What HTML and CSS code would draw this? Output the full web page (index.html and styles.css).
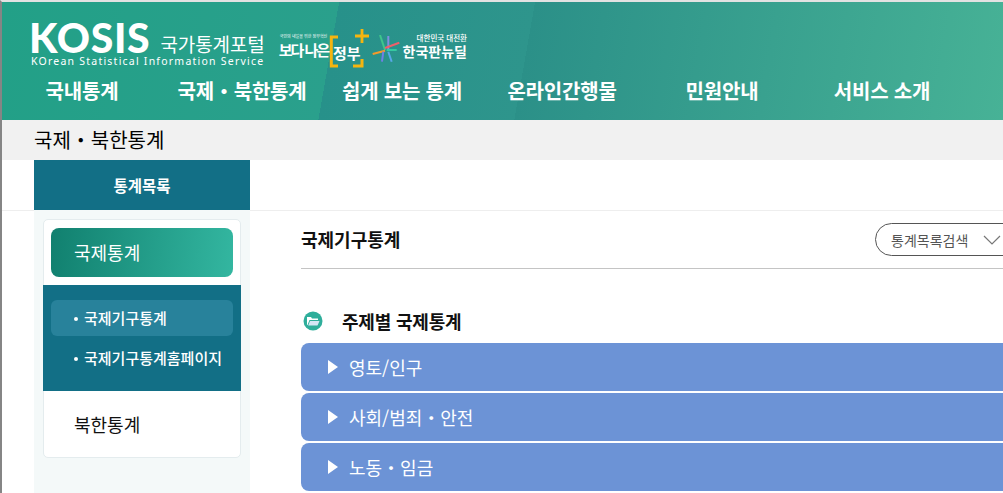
FILE: index.html
```html
<!doctype html>
<html lang="ko">
  <head>
    <meta charset="UTF-8" />
    <title>KOSIS 국제・북한통계</title>
    <link rel="stylesheet" href="styles.css">
  </head>

  <body>
    <div id="page">
      <div id="header">
        <div class="logo_row">
          <div class="kosis">
            <div class="kosis_top">
              <span class="kosis_name">KOSIS</span>
              <span class="kosis_kr">국가통계포털</span>
            </div>
            <div class="kosis_en">KOrean Statistical Information Service</div>
          </div>
          <div class="gov">
            <div class="gov_words">
              <span class="gov_small">국민의 내일을 위한 정부혁신</span>
              <span class="gov_big">보다 나은</span>
            </div>
            <div class="gov_box">
              <span class="gov_word">정부</span>
              <svg class="gov_marks" width="44" height="42" viewBox="0 0 44 42">
                <path d="M11 9H4.300V38H11M26 38H35V31" fill="none" stroke="#f5b50f" stroke-width="3"/>
                <path d="M35 1V15M28 8H42" fill="none" stroke="#f5b50f" stroke-width="2.800"/>
              </svg>
            </div>
          </div>
          <svg class="deal_icon" width="28" height="28" viewBox="0 0 28 28">
            <path d="M8 0L13 15" stroke="#3fc68c" stroke-width="2"/>
            <path d="M16.300 1V15" stroke="#7f8fe0" stroke-width="2"/>
            <path d="M13 13L27.300 7.700" stroke="#ef5f6a" stroke-width="2"/>
            <path d="M0.700 19L13 15.700" stroke="#f59a2a" stroke-width="2"/>
            <path d="M14.700 15H24.700" stroke="#35c9a0" stroke-width="2"/>
            <path d="M11.300 16.700L10 26.700" stroke="#6f7fe6" stroke-width="2"/>
            <path d="M16.300 16.700L19.700 26.700" stroke="#58a8e8" stroke-width="2"/>
          </svg>
          <div class="deal">
            <span class="deal_small">대한민국 대전환</span>
            <span class="deal_big">한국판뉴딜</span>
          </div>
        </div>
        <div class="nav">
          <span>국내통계</span>
          <span>국제・북한통계</span>
          <span>쉽게 보는 통계</span>
          <span>온라인간행물</span>
          <span>민원안내</span>
          <span>서비스 소개</span>
        </div>
      </div>

      <div id="crumb">국제・북한통계</div>

      <div id="content">
        <div id="side">
          <div class="side_head">통계목록</div>
          <div class="side_body">
            <div class="card">
              <div class="card_top">
                <div class="card_btn">국제통계</div>
              </div>
              <div class="sub">
                <div class="sub_item sub_on">국제기구통계</div>
                <div class="sub_item">국제기구통계홈페이지</div>
              </div>
              <div class="card_plain">북한통계</div>
            </div>
          </div>
        </div>

        <div id="main">
          <div class="main_head">
            <h3 class="main_title">국제기구통계</h3>
            <div class="pill">
              <span>통계목록검색</span>
              <svg width="18" height="10" viewBox="0 0 18 10">
                <path d="M1 1L9 9L17 1" fill="none" stroke="#777" stroke-width="1.200"/>
              </svg>
            </div>
          </div>

          <div class="sec_head">
            <svg width="20" height="20" viewBox="0 0 20 20">
              <circle cx="10" cy="10" r="9.500" fill="#2fae9b"/>
              <path d="M4 6H8L9 7.500H15V9H6.500L4.500 14H4Z" fill="#fff"/>
              <path d="M7 10H16.500L14.500 14.500H5.200Z" fill="#d5e6f5"/>
            </svg>
            <span>주제별 국제통계</span>
          </div>

          <div class="bar"><i class="arrow"></i>영토/인구</div>
          <div class="bar"><i class="arrow"></i>사회/범죄・안전</div>
          <div class="bar"><i class="arrow"></i>노동・임금</div>
        </div>
      </div>
    </div>
  </body>
</html>
```

FILE: styles.css
```css
html,
body {
  margin: 0;
  height: 100%;
  overflow: hidden;
  background-color: white;
  font-family: "Noto Sans CJK KR", "Noto Sans", sans-serif;
}

#page {
  width: 1003px;
  height: 493px;
  box-sizing: border-box;
  border-left: 2px solid #858585;
  border-top: 2px solid #e2e2e2;
  overflow: hidden;
}

#header {
  height: 118px;
  color: white;
  background: linear-gradient(100deg, #22a087 0, #2aa08c 332px, #27918a 332px, #2e958c 525px, #2b9088 525px, #47b296 100%);
}

.logo_row {
  display: flex;
  align-items: flex-start;
  height: 75px;
  padding-left: 29px;
  box-sizing: border-box;
}

.kosis {
  width: 240px;
  padding-top: 20px;
}

.kosis_top {
  display: flex;
  align-items: flex-end;
  height: 32px;
}

.kosis_name {
  margin-left: -2px;
  font-family: Lato, "Noto Sans", sans-serif;
  font-size: 41px;
  font-weight: 900;
  line-height: 32px;
  letter-spacing: 0.700px;
}

.kosis_kr {
  margin-left: 10px;
  font-size: 19px;
  line-height: 20px;
  letter-spacing: -0.100px;
}

.kosis_en {
  margin-top: 1px;
  font-family: "Noto Sans", sans-serif;
  font-size: 10.500px;
  line-height: 12px;
  letter-spacing: 1.230px;
  white-space: nowrap;
}

.gov {
  display: flex;
  align-items: flex-start;
  margin-left: 9px;
  padding-top: 31px;
}

.gov_words {
  display: flex;
  flex-direction: column;
  align-items: center;
  width: 47px;
}

.gov_small {
  font-size: 4px;
  line-height: 7px;
  white-space: nowrap;
}

.gov_big {
  font-size: 15px;
  font-weight: 700;
  line-height: 20px;
  letter-spacing: -2px;
  white-space: nowrap;
}

.gov_box {
  position: relative;
  width: 42px;
  box-sizing: border-box;
  padding: 7px 0 0 6px;
}

.gov_word {
  font-size: 15px;
  font-weight: 700;
  line-height: 20px;
  white-space: nowrap;
}

.gov_marks {
  position: absolute;
  left: 0;
  top: -5px;
}

.deal_icon {
  margin: 33px 0 0 3px;
}

.deal {
  display: flex;
  flex-direction: column;
  align-items: flex-end;
  width: 64px;
  margin-left: 3px;
  padding-top: 31px;
}

.deal_small {
  margin-bottom: -2px;
  font-size: 7.500px;
  font-weight: 500;
  line-height: 10px;
  white-space: nowrap;
}

.deal_big {
  font-size: 14px;
  font-weight: 700;
  line-height: 20px;
  white-space: nowrap;
}

.nav {
  display: grid;
  grid-template-columns: repeat(6, 160px);
  font-size: 20px;
  font-weight: 700;
  line-height: 28px;
  text-align: center;
  white-space: nowrap;
  letter-spacing: -0.200px;
}

#crumb {
  height: 40px;
  padding-left: 32px;
  background-color: #f1f1f1;
  color: #000;
  font-size: 20px;
  font-weight: 400;
  line-height: 40px;
}

#content {
  display: flex;
  padding-left: 32px;
  background: linear-gradient(#eeeeee, #eeeeee) 0 50px / 100% 1px no-repeat;
}

#side {
  flex: none;
  width: 216px;
}

.side_head {
  height: 50px;
  background-color: #126f86;
  color: white;
  font-size: 15.500px;
  font-weight: 700;
  line-height: 50px;
  text-align: center;
}

.side_body {
  height: 300px;
  padding: 9px 9px;
  box-sizing: border-box;
  background-color: #f4f9f9;
}

.card {
  width: 198px;
  height: 239px;
  box-sizing: border-box;
  border: 1px solid #e4ecee;
  border-radius: 5px;
  background-color: white;
}

.card_top {
  padding: 8px 7px 8px;
}

.card_btn {
  height: 49px;
  padding-left: 23px;
  border-radius: 8px;
  background: linear-gradient(95deg, #11806f, #33b6a0);
  color: white;
  font-size: 18px;
  line-height: 49px;
}

.sub {
  height: 106px;
  margin: 0 -1px;
  padding: 15px 8px 0;
  box-sizing: border-box;
  background-color: #126f86;
  color: white;
  font-size: 15px;
  font-weight: 500;
}

.sub_item {
  height: 36px;
  margin-bottom: 4px;
  padding-left: 23px;
  border-radius: 6px;
  line-height: 36px;
  white-space: nowrap;
}

.sub_item::before {
  content: "";
  display: inline-block;
  width: 4px;
  height: 4px;
  margin-right: 6px;
  border-radius: 50%;
  background-color: white;
  vertical-align: 3px;
}

.sub_on {
  background-color: #28829b;
}

.card_plain {
  padding: 18px 0 0 30px;
  color: #111;
  font-size: 18px;
  line-height: 30px;
}

#main {
  flex: none;
  width: 760px;
  margin-left: 51px;
}

.main_head {
  display: flex;
  justify-content: space-between;
  align-items: center;
  padding: 63px 0 12px;
  border-bottom: 1px solid #c4c4c4;
}

.main_title {
  margin: 0;
  color: #111;
  font-size: 18px;
  font-weight: 700;
  line-height: 33px;
}

.pill {
  display: flex;
  align-items: center;
  gap: 15px;
  width: 186px;
  height: 33px;
  box-sizing: border-box;
  padding-left: 15px;
  border: 1px solid #555;
  border-radius: 17px;
  color: #555;
  font-size: 14px;
}

.sec_head {
  display: flex;
  align-items: center;
  gap: 19px;
  height: 24px;
  margin: 40px 0 10px 2px;
  color: #111;
  font-size: 18px;
  font-weight: 700;
  letter-spacing: -0.200px;
}

.bar {
  display: flex;
  align-items: center;
  height: 48px;
  margin-bottom: 2px;
  padding-left: 27px;
  border-radius: 8px;
  background-color: #6c93d6;
  color: white;
  font-size: 18px;
}

.arrow {
  width: 0;
  height: 0;
  margin-right: 11px;
  border-left: 10px solid white;
  border-top: 7px solid transparent;
  border-bottom: 7px solid transparent;
}
```
